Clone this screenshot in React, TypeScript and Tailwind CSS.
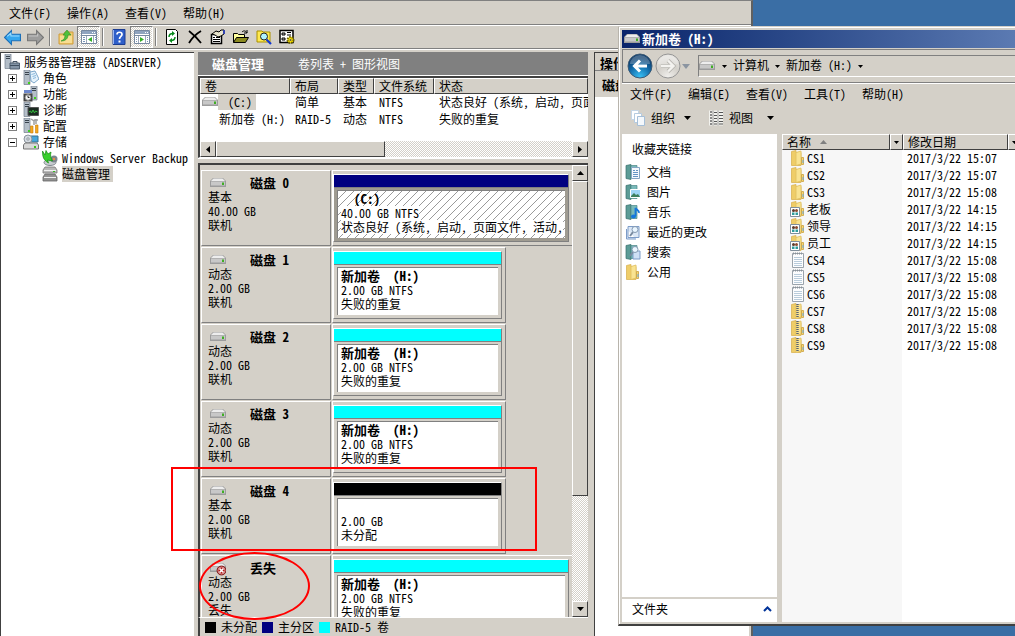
import type { ReactNode } from 'react'

type IconProps = { className?: string }

const RAISED = 'border border-t-white border-l-white border-r-[#404040] border-b-[#404040] bg-[#d4d0c8]'
const TRACK = 'bg-[repeating-conic-gradient(#ffffff_0_25%,#d4d0c8_0_50%)] bg-[length:2px_2px]'

function Svg({ children, className = 'h-4 w-4' }: { children: ReactNode; className?: string }) {
  return (
    <svg viewBox="0 0 16 16" className={`block shrink-0 ${className}`} aria-hidden="true">
      {children}
    </svg>
  )
}

function ArrowIcon({ forward = false }: { forward?: boolean }) {
  return (
    <Svg className="h-[17px] w-[17px]">
      <path
        d={forward ? 'M15.5 8 9 1.500v3.500H.5v6H9v3.500z' : 'M.5 8 7 1.500v3.500h8.500v6H7v3.500z'}
        fill={forward ? '#9d9d9d' : '#35a7ee'}
        stroke={forward ? '#777' : '#1c6fb8'}
      />
      <path d={forward ? 'M1.500 6.500H10V4.500' : 'M3 7 6.500 4V6.500h8'} stroke={forward ? '#c4c4c4' : '#9bdcff'} fill="none" />
    </Svg>
  )
}

function UpFolderIcon() {
  return (
    <Svg>
      <path d="M1 5h5l1-2h8v12H1z" fill="#f2ce72" stroke="#cf9c3a" />
      <path d="M2 7h12v7H2z" fill="#f8dd93" />
      <path d="M3 12c3-1 4-3 4-6H5l4-5 4 5h-3c0 4-3 6-7 6z" fill="#4fc13c" stroke="#2f8f24" strokeWidth=".6" />
    </Svg>
  )
}

function PaneIcon({ right = false }: { right?: boolean }) {
  return (
    <Svg>
      <path d="M.5 1.500h15v13H.5z" fill="#fff" stroke="#7788a0" />
      <path d="M1 2h14v3H1z" fill="#8fa3bf" />
      <path d="M11 3.500h1M13 3.500h1" stroke="#fff" />
      <path d="M1 6.500h14" stroke="#7788a0" />
      <path d={right ? 'M4.500 7v7M11.500 7v7' : 'M5.500 7v7M12.500 7v7'} stroke="#9aa7ba" />
      <path d={right ? 'M2 8.500h1M2 10.500h1M2 12.500h1M13 8.500h1M13 10.500h1M13 12.500h1' : 'M2 8.500h2M2 10.500h2M2 12.500h2M14 8.500h1M14 10.500h1'} stroke="#7a95b8" />
      <path d={right ? 'M6 8v5l4-2.500z' : 'M11 8v5l-4-2.500z'} fill="#36ae28" />
    </Svg>
  )
}

function HelpIcon() {
  return (
    <Svg>
      <path d="M2 .5h12v15H2z" fill="#2f5fc9" stroke="#1c3d91" />
      <path d="M2.500 1v14" stroke="#9fb7ee" />
      <path d="M6 5.500C6 2.500 11 2.500 11 5.500 11 7.500 8.500 7.500 8.500 10" stroke="#fff" strokeWidth="1.700" fill="none" />
      <path d="M7.500 11.500h2v2h-2z" fill="#fff" />
    </Svg>
  )
}

function RefreshIcon() {
  return (
    <Svg>
      <path d="M2.500.5h9l2 2v13h-11z" fill="#fff" stroke="#000" />
      <path d="M5 8c0-3 1.500-3.500 4-3.500M11 8c0 3-1.500 3.500-4 3.500" stroke="#078a1c" strokeWidth="1.500" fill="none" />
      <path d="M8 2v5l3-2.500zM8 9v5l-3-2.500z" fill="#078a1c" />
    </Svg>
  )
}

function DeleteIcon() {
  return (
    <Svg>
      <path d="M2 2c4 3 8 7 12 12M14 2C9 5 5 9 2 14" stroke="#000" strokeWidth="1.800" fill="none" />
    </Svg>
  )
}

function PropertiesIcon() {
  return (
    <Svg>
      <path d="M1.500 5.500h10v9h-10z" fill="#fff" stroke="#000" strokeWidth="1.500" />
      <path d="M3 8.500h2M6 8.500h4M3 10.500h7M3 12.500h7" stroke="#000" />
      <path d="m2 5 4-3 3 1 2-2h3v4l-3 2-3 1-3-2z" fill="#e8e4cc" stroke="#000" />
      <path d="M13 1h2v4h-2z" fill="#3344b0" />
    </Svg>
  )
}

function OpenIcon() {
  return (
    <Svg>
      <path d="M.5 13.500v-9h4l1 1h6v3" fill="#ffff9c" stroke="#000" />
      <path d="m.5 13.500 3-5h12l-3 5z" fill="#8b8a20" stroke="#000" />
      <path d="M9 3c2-2 4-1 5 1m0-3v3h-3" fill="none" stroke="#000" />
    </Svg>
  )
}

function FindIcon() {
  return (
    <Svg>
      <path d="M1 2h5l1 1h7v10H1z" fill="#ffe94f" stroke="#a99000" />
      <circle cx="8" cy="7.500" r="3.500" fill="#aef2ff" stroke="#222" />
      <path d="m10.500 10.500 4.500 4.500" stroke="#1237d0" strokeWidth="2.200" />
    </Svg>
  )
}

function SettingsIcon() {
  return (
    <Svg>
      <path d="M1 1.500h13v12H1z" fill="#fff" stroke="#000" strokeWidth="1.500" />
      <path d="M3 4h3v2H3zM3 9h3v2H3zM8 3.500h4M8 6h4" stroke="#000" fill="#bbb" />
      <circle cx="11.500" cy="11" r="3" fill="#ffe600" stroke="#6b6000" strokeWidth="2" strokeDasharray="1.500 1" />
      <circle cx="11.500" cy="11" r="1" fill="#555" />
    </Svg>
  )
}

/* Server tower with a small overlay in the lower right */
function ServerIcon({ kind }: { kind: 'root' | 'roles' | 'features' | 'diag' | 'config' }) {
  return (
    <Svg>
      <path d={kind === 'features' ? 'M8 0h6v14H8z' : 'M1 0h6v14.500H1z'} fill="#b4bec8" stroke="#74808c" strokeWidth=".7" />
      <path d={kind === 'features' ? 'M9 2.500h4M9 4.500h4' : 'M2 2.500h4M2 4.500h4'} stroke="#39434d" />
      {kind === 'root' && (
        <>
          <path d="M6 9h9.500v6H6z" fill="#8394a6" stroke="#506070" />
          <path d="M9 9V7.500h4V9M6 11.500h9" fill="none" stroke="#405060" />
        </>
      )}
      {kind === 'roles' && (
        <>
          <path d="m7 2 5-1 4 8-5 4-3-2z" fill="#e6f2fb" stroke="#5f92bd" strokeWidth=".8" />
          <path d="m8.500 4.500 3.500-1M9.500 6.500l3.500-1M10 8.500l3-1" stroke="#72a9d6" strokeWidth=".8" />
          <path d="M5 12h2v2H5z" fill="#3fd01b" />
        </>
      )}
      {kind === 'features' && (
        <>
          <path d="M1 4h8v3H1z" fill="#6d87cc" />
          <path d="M.5 7.500h9v8h-9z" fill="#444" />
          <circle cx="5" cy="11.500" r="2.800" fill="#f6f6f6" stroke="#999" />
          <path d="M5 9.500v2h1.500" stroke="#222" fill="none" />
          <path d="M11 11h2v2h-2z" fill="#3fd01b" />
        </>
      )}
      {kind === 'diag' && (
        <>
          <path d="M5 5.500h10.500v8H5z" fill="#1b2a20" stroke="#555" />
          <path d="m6 10 1.500-1 1 2 1.500-3 1.500 3 1-2 2 1" stroke="#35b93c" fill="none" />
        </>
      )}
      {kind === 'config' && (
        <>
          <path d="m8 1 3 2v4M13 1v5M11 2h4" stroke="#a1a1a1" strokeWidth="1.500" fill="none" />
          <path d="M7.500 8h2.500v7H7.500zM12.500 7h2.500v8h-2.500z" fill="#f5a91f" stroke="#c87a08" strokeWidth=".6" />
          <path d="M5 12h2v2H5z" fill="#3fd01b" />
        </>
      )}
    </Svg>
  )
}

function StorageIcon() {
  return (
    <Svg>
      <path d="M8 2h7v6H8z" fill="#47a7dc" stroke="#39708f" />
      <circle cx="5" cy="5" r="4" fill="#d4dae0" stroke="#8a939c" />
      <circle cx="5" cy="5" r="1.200" fill="#fff" stroke="#8a939c" />
      <path d="m2 9h12l1.500 2v4H.5v-4z" fill="#d8d8d8" stroke="#777" />
      <path d="M11 12h2v2h-2z" fill="#32cb16" />
    </Svg>
  )
}

function BackupIcon() {
  return (
    <Svg>
      <ellipse cx="8" cy="12.500" rx="6" ry="3" fill="#c7ccd0" stroke="#81888f" />
      <circle cx="12" cy="9" r="3.500" fill="#7b858e" />
      <circle cx="12" cy="9" r="1.200" fill="#e98b4d" />
      <path d="M.5 1c0 6 1 9 6 12l-1-3 5 1C9 8 8 6 9 2L6 4 4 .5 3 5z" fill="#39d02c" stroke="#148b10" strokeWidth=".7" />
    </Svg>
  )
}

function DiskManagementIcon() {
  return (
    <Svg>
      <path d="M3 1h10l2 3v3H1V4z" fill="#b8b8b8" stroke="#777" strokeWidth=".8" />
      <path d="M3 8h10l2 3v4H1v-4z" fill="#929292" stroke="#666" strokeWidth=".8" />
      <path d="M2 4.500h12M2 11.500h12" stroke="#f0f0f0" />
      <path d="M11 5.500h2" stroke="#35bb21" />
    </Svg>
  )
}

function DriveIcon({ lost = false }: { lost?: boolean }) {
  return (
    <Svg>
      <path d="M3 3h10l3 3v6H0V6z" fill="#9c9c9c" />
      <path d="M3.500 3.500h9l2.500 2.500H1z" fill="#ededed" />
      <path d="M1 6.500h14v4H1z" fill="#c8c8c8" />
      <path d="M12 7.500h2V10h-2z" fill={lost ? '#999' : '#3fae23'} />
      {lost && (
        <>
          <circle cx="11.500" cy="10.500" r="4.500" fill="#b31b1b" stroke="#6d0d0d" strokeWidth=".8" />
          <circle cx="11.500" cy="10.500" r="3.500" fill="none" stroke="#e9c4c4" strokeWidth=".7" />
          <path d="m9.500 8.500 4 4m0-4-4 4" stroke="#fff" strokeWidth="1.600" />
        </>
      )}
    </Svg>
  )
}

function FolderIcon({ kind = 'plain' }: { kind?: string }) {
  return (
    <Svg>
      <path d="M1.500 1.500 6 .5v2h5v13H1.500z" fill="#efcd68" stroke="#d9b454" strokeWidth=".8" />
      <path d="M6 2.500 11 1v13l-5 1.500z" fill="#f9e391" stroke="#dfbf60" strokeWidth=".8" />
      <path d="M11.500 7.500h2v7h-2z" fill="#f4d674" stroke="#c9a03c" strokeWidth=".8" />
      <path d="M13 10v3" stroke="#6aa8e0" />
      {kind === 'zip' && (
        <path d="M7.500 1v14" stroke="#5b6470" strokeWidth="2.400" strokeDasharray="1 1" />
      )}
      {kind === 'shared' && (
        <>
          <path d="M.5 6.500h9v9h-9z" fill="#fff" stroke="#7f8f9c" />
          <circle cx="3.500" cy="9.500" r="1.500" fill="#5b3b2d" />
          <circle cx="6.500" cy="9.500" r="1.500" fill="#8b4a2d" />
          <path d="M2 14v-2.500h2.500V14M5.500 14v-2.500H8V14" fill="#2f9c9c" />
        </>
      )}
    </Svg>
  )
}

function TextFileIcon() {
  return (
    <Svg>
      <path d="M2.500 1.500h11v14h-11z" fill="#fcfdfe" stroke="#9aa3ab" />
      <path d="M4 5.500h8M4 7.500h8M4 9.500h8M4 11.500h8M4 13.500h8" stroke="#b9ccdb" />
      <path d="M3 1.500h10" stroke="#8a9299" strokeWidth="2" strokeDasharray="1 1" />
    </Svg>
  )
}

function LinkIcon({ kind }: { kind: string }) {
  if (kind === 'folder') return <FolderIcon />
  return (
    <Svg>
      {kind === 'recent' ? (
        <path d="M3 2.500h11v11H3zM1.500 5v10H11" fill="#dbe7f5" stroke="#7d9cc8" />
      ) : (
        <>
          <path d="M1 1.500 6 .5v15l-5-1z" fill="#5c9c96" stroke="#376f6c" strokeWidth=".7" />
          <path d="M6 1.500h6v13H6z" fill="#79b9b9" stroke="#4a8787" strokeWidth=".7" />
        </>
      )}
      {kind === 'doc' && (
        <>
          <path d="M6.500 3.500h8v11h-8z" fill="#f5f9fd" stroke="#86a6c3" />
          <path d="M8 6.500h2M11 6.500h2M8 8.500h5M8 10.500h5M8 12.500h5" stroke="#6394c4" />
        </>
      )}
      {kind === 'picture' && (
        <>
          <path d="M5.500 5.500h10v8h-10z" fill="#9fd5f5" stroke="#fff" />
          <path d="m6 12 3-3 2 2 2-1 2 3H6z" fill="#3d7f5d" />
        </>
      )}
      {kind === 'music' && (
        <>
          <path d="M10.500 12V4c1 2 4 2 3.500 5" stroke="#1477dc" strokeWidth="1.800" fill="none" />
          <ellipse cx="8.500" cy="12.500" rx="2.500" ry="2" fill="#1477dc" />
        </>
      )}
      {(kind === 'recent' || kind === 'search') && (
        <>
          {kind === 'search' && <path d="M8 7h7v8H8z" fill="#cfe0f5" stroke="#7d9cc8" />}
          <path d="m5 12 3-4" stroke="#7a8ba0" strokeWidth="2" />
          <circle cx="10" cy="5.500" r="3" fill="#eaf6ff" stroke="#8499b0" />
        </>
      )}
    </Svg>
  )
}

function OrganizeIcon() {
  return (
    <Svg>
      <path d="M1.500.5h7v9h-7z" fill="#fff" stroke="#c5d6e6" />
      <path d="M4.500 3.500h7v9h-7z" fill="#fff" stroke="#b5cbe0" />
      <path d="M7.500 6.500h7v9h-7z" fill="#f4f8fc" stroke="#a5bfd8" />
    </Svg>
  )
}

function ViewIcon() {
  return (
    <Svg>
      <path d="M1 .5h14v15H1z" fill="#f2f2ee" />
      <path d="M3 1v14" stroke="#8a8a8a" strokeWidth="2" strokeDasharray="2 1" />
      <path d="M6 2.500h3M6 5.500h3M6 8.500h3M6 11.500h3M6 14h3M11 2.500h4M11 5.500h4M11 8.500h4M11 11.500h4M11 14h4" stroke="#555" />
      <path d="M5 .5v15M10 .5v15" stroke="#999" />
    </Svg>
  )
}

function Triangle({ dir = 'down', className = 'h-[4px] w-[7px]' }: IconProps & { dir?: 'up' | 'down' | 'left' | 'right' }) {
  const paths = { down: 'M0 0h8L4 8z', up: 'M0 8h8L4 0z', left: 'M8 0v8L0 4z', right: 'M0 0v8l8-4z' }
  return (
    <svg viewBox="0 0 8 8" preserveAspectRatio="none" className={`block shrink-0 ${className}`} aria-hidden="true">
      <path d={paths[dir]} fill="currentColor" />
    </svg>
  )
}

function MenuBar({ items, className }: { items: string[]; className: string }) {
  return (
    <nav className={`flex items-center gap-4 ${className}`}>
      {items.map((item) => (
        <button key={item} className="whitespace-nowrap">{item}</button>
      ))}
    </nav>
  )
}

function ToolButton({ label, pressed = false, children }: { label: string; pressed?: boolean; children: ReactNode }) {
  return (
    <button
      aria-label={label}
      className={`flex h-[22px] w-[23px] shrink-0 items-center justify-center ${
        pressed ? `border border-t-[#808080] border-l-[#808080] border-r-white border-b-white ${TRACK}` : ''
      }`}
    >
      {children}
    </button>
  )
}

function ToolDivider() {
  return <div className="mr-[3px] ml-[2px] h-[18px] w-[2px] shrink-0 border-l border-l-[#808080] border-r border-r-white" />
}

const treeItems = [
  { label: '角色', icon: <ServerIcon kind="roles" />, open: false },
  { label: '功能', icon: <ServerIcon kind="features" />, open: false },
  { label: '诊断', icon: <ServerIcon kind="diag" />, open: false },
  { label: '配置', icon: <ServerIcon kind="config" />, open: false },
  { label: '存储', icon: <StorageIcon />, open: true },
]

function Tree() {
  return (
    <nav className="w-[194px] shrink-0 overflow-hidden border-t border-l border-[#404040] bg-white pt-px leading-4 whitespace-nowrap">
      <div className="flex items-center gap-1 pl-[3px]">
        <ServerIcon kind="root" />
        服务器管理器 (ADSERVER)
      </div>
      <ul>
        {treeItems.map((item) => (
          <li key={item.label} className="flex items-center pl-[7px]">
            <button
              aria-label={item.label}
              className="mr-[6px] flex h-[9px] w-[9px] items-center justify-center border border-[#808080]"
            >
              <svg viewBox="0 0 5 5" className="block h-[5px] w-[5px]">
                <path d={item.open ? 'M0 2.500h5' : 'M0 2.500h5M2.500 0v5'} stroke="#000" />
              </svg>
            </button>
            {item.icon}
            <span className="pl-1">{item.label}</span>
          </li>
        ))}
        <li className="flex items-center gap-1 pl-[41px]">
          <BackupIcon />
          Windows Server Backup
        </li>
        <li className="flex items-center gap-1 pl-[41px]">
          <DiskManagementIcon />
          <span className="bg-[#d4d0c8] pr-[3px]">磁盘管理</span>
        </li>
      </ul>
    </nav>
  )
}

const volumes = [
  { name: '(C:)', layout: '简单', type: '基本', fs: 'NTFS', status: '状态良好 (系统, 启动, 页面文件, 活动', selected: true },
  { name: '新加卷 (H:)', layout: 'RAID-5', type: '动态', fs: 'NTFS', status: '失败的重复', selected: false },
]

const volumeColumns = [
  { label: '卷', width: 'w-[90px]' },
  { label: '布局', width: 'w-[48px]' },
  { label: '类型', width: 'w-[36px]' },
  { label: '文件系统', width: 'w-[60px]' },
  { label: '状态', width: '' },
]

function VolumeList() {
  return (
    <section className="border-t-2 border-l-2 border-[#404040] border-b border-b-white bg-white">
      <div className="h-[63px] overflow-hidden">
        <table className="w-full table-fixed border-collapse whitespace-nowrap">
          <thead>
            <tr>
              {volumeColumns.map((c) => (
                <th key={c.label} className={`p-0 font-normal ${c.width}`}>
                  <button className={`block h-4 w-full pl-1 text-left leading-[14px] ${RAISED}`}>
                    {c.label}
                  </button>
                </th>
              ))}
            </tr>
          </thead>
          <tbody className="leading-4">
            {volumes.map((v) => (
              <tr key={v.name}>
                <td className="p-0 pb-px">
                  {v.selected ? (
                    <div className="flex items-center pl-[2px]">
                      <DriveIcon />
                      <span className="bg-[#d4d0c8] pr-1 pl-[10px]">{v.name}</span>
                    </div>
                  ) : (
                    <div className="pl-[19px]">{v.name}</div>
                  )}
                </td>
                <td className="p-0 pb-px pl-[5px]">{v.layout}</td>
                <td className="p-0 pb-px pl-[5px]">{v.type}</td>
                <td className="p-0 pb-px pl-[5px]">{v.fs}</td>
                <td className="overflow-hidden p-0 pb-px pl-[5px]">{v.status}</td>
              </tr>
            ))}
          </tbody>
        </table>
      </div>
      <div className={`flex h-4 ${TRACK}`}>
        <button aria-label="向左滚动" className={`flex w-4 items-center justify-center ${RAISED}`}>
          <Triangle dir="left" className="h-[7px] w-[4px]" />
        </button>
        <div className={`w-[169px] ${RAISED}`} />
        <button aria-label="向右滚动" className={`ml-auto flex w-4 items-center justify-center ${RAISED}`}>
          <Triangle dir="right" className="h-[7px] w-[4px]" />
        </button>
      </div>
    </section>
  )
}

interface Disk {
  name: string
  type: string
  size: string
  state: string
  bar: string
  lines: string[]
  wide?: boolean
  selected?: boolean
  lost?: boolean
}

const raidLines = ['新加卷  (H:)', '2.00 GB NTFS', '失败的重复']

const disks: Disk[] = [
  {
    name: '磁盘 0', type: '基本', size: '40.00 GB', state: '联机', bar: 'bg-[#000080]',
    lines: ['  (C:)', '40.00 GB NTFS', '状态良好 (系统, 启动, 页面文件, 活动,'], wide: true, selected: true,
  },
  { name: '磁盘 1', type: '动态', size: '2.00 GB', state: '联机', bar: 'bg-[#00ffff]', lines: raidLines },
  { name: '磁盘 2', type: '动态', size: '2.00 GB', state: '联机', bar: 'bg-[#00ffff]', lines: raidLines },
  { name: '磁盘 3', type: '动态', size: '2.00 GB', state: '联机', bar: 'bg-[#00ffff]', lines: raidLines },
  { name: '磁盘 4', type: '基本', size: '2.00 GB', state: '联机', bar: 'bg-black', lines: ['', '2.00 GB', '未分配'] },
  { name: '丢失', type: '动态', size: '2.00 GB', state: '丢失', bar: 'bg-[#00ffff]', lines: raidLines, wide: true, lost: true },
]

function Hatch() {
  return (
    <svg className="absolute inset-0 h-full w-full" aria-hidden="true">
      <defs>
        <pattern id="hatch" width="8" height="8" patternUnits="userSpaceOnUse">
          <path d="M-1 9 9-1M-1 1l2-2M7 9l2-2" stroke="#9a9a9a" strokeWidth="1" />
        </pattern>
      </defs>
      <rect width="100%" height="100%" fill="url(#hatch)" />
    </svg>
  )
}

function DiskRow({ disk }: { disk: Disk }) {
  return (
    <li className="mb-px flex h-[76px] gap-px">
      <div className="w-[130px] shrink-0 border border-t-white border-l-white border-r-[#808080] border-b-[#808080] pt-[5px] pl-[6px] leading-[14px]">
        <div className="flex h-[14px] items-center gap-6 text-[13px] font-bold">
          <span className="pl-[2px]"><DriveIcon lost={disk.lost} /></span>
          {disk.name}
        </div>
        <p>{disk.type}</p>
        <p>{disk.size}</p>
        <p>{disk.state}</p>
      </div>
      <div
        className={`flex border-t border-l border-t-white border-l-white border-b border-b-[#808080] pt-[3px] pb-[3px] pr-[3px] ${
          disk.wide ? 'min-w-0 flex-1' : 'w-[174px] border-r border-r-[#808080]'
        }`}
      >
        <div className="flex min-w-0 flex-1 flex-col border border-t-white border-l-white border-r-[#808080] border-b-[#808080]">
          <div className={`h-[13px] border-b border-[#808080] ${disk.bar}`} />
          <div className={`flex min-h-0 flex-1 px-[3px] pt-[2px] pb-[3px] ${disk.selected ? 'bg-[#9f9b91]' : ''}`}>
            <div className="relative min-w-0 flex-1 overflow-hidden border-t border-l border-[#808080] bg-white pt-px pl-[3px] leading-[14px] whitespace-pre">
              {disk.selected && <Hatch />}
              {disk.lines.map((line, i) => (
                <p
                  key={i}
                  className={`relative h-[14px] w-fit ${i === 0 ? 'text-[13px] font-bold' : ''} ${
                    disk.selected && i > 0 ? 'bg-white' : ''
                  }`}
                >
                  {line}
                </p>
              ))}
            </div>
          </div>
        </div>
      </div>
    </li>
  )
}

function DiskGraph() {
  return (
    <section className="flex min-h-0 flex-1 border-t-2 border-l-2 border-[#404040]">
      <ul className="min-w-0 flex-1 overflow-hidden pt-[5px] pl-px">
        {disks.map((d) => (
          <DiskRow key={d.name} disk={d} />
        ))}
      </ul>
      <div className={`flex w-4 shrink-0 flex-col ${TRACK}`}>
        <button aria-label="向上滚动" className={`flex h-4 items-center justify-center ${RAISED}`}>
          <Triangle dir="up" />
        </button>
        <div className={`h-[315px] ${RAISED}`} />
        <button aria-label="向下滚动" className={`mt-auto flex h-4 items-center justify-center ${RAISED}`}>
          <Triangle />
        </button>
      </div>
    </section>
  )
}

const legend = [
  { label: '未分配', color: 'bg-black' },
  { label: '主分区', color: 'bg-[#000080]' },
  { label: 'RAID-5 卷', color: 'bg-[#00ffff]' },
]

function ServerManager() {
  return (
    <main className="mr-[262px] flex h-full flex-col border-t border-t-[#808080] border-r-2 border-r-[#606060] bg-[#d4d0c8]">
      <MenuBar
        items={['文件(F)', '操作(A)', '查看(V)', '帮助(H)']}
        className="h-6 border-b border-b-[#808080] pl-[9px]"
      />
      <div className="flex h-[24px] items-center border-t border-t-white border-b border-b-[#808080] pl-px">
        <ToolButton label="后退"><ArrowIcon /></ToolButton>
        <ToolButton label="前进"><ArrowIcon forward /></ToolButton>
        <ToolDivider />
        <ToolButton label="向上"><UpFolderIcon /></ToolButton>
        <ToolButton label="显示控制台树" pressed><PaneIcon /></ToolButton>
        <ToolDivider />
        <ToolButton label="帮助"><HelpIcon /></ToolButton>
        <ToolButton label="显示操作窗格" pressed><PaneIcon right /></ToolButton>
        <ToolDivider />
        <ToolButton label="刷新"><RefreshIcon /></ToolButton>
        <ToolButton label="删除"><DeleteIcon /></ToolButton>
        <ToolButton label="属性"><PropertiesIcon /></ToolButton>
        <ToolButton label="打开"><OpenIcon /></ToolButton>
        <ToolButton label="查找"><FindIcon /></ToolButton>
        <ToolButton label="设置"><SettingsIcon /></ToolButton>
      </div>
      <div className="flex min-h-0 flex-1 border-t border-t-white pt-[2px]">
        <Tree />
        <div className="ml-1 flex w-[390px] shrink-0 flex-col">
          <header className="flex h-6 items-center gap-[34px] border-b border-b-white bg-[#808080] pl-[14px] text-white">
            <h1 className="text-[13px] font-bold">磁盘管理</h1>
            <span>卷列表 + 图形视图</span>
          </header>
          <VolumeList />
          <div className="h-[5px] border-t border-t-white" />
          <DiskGraph />
          <footer className="flex h-[19px] shrink-0 items-center gap-[5px] border-t border-l-2 border-t-white border-l-[#404040] pl-[5px]">
            {legend.map((l) => (
              <span key={l.label} className="flex items-center gap-[5px]">
                <i className={`block h-[11px] w-[11px] ${l.color}`} />
                {l.label}
              </span>
            ))}
          </footer>
        </div>
        <aside className="ml-[6px] min-w-0 flex-1 overflow-hidden border-l border-t border-[#404040] bg-white text-[13px] font-bold whitespace-nowrap">
          <h2 className="h-[18px] border-b border-b-[#808080] bg-[#d4d0c8] pl-[5px] leading-[20px]">操作</h2>
          <h3 className="h-[26px] bg-[#d4d0c8] pl-[7px] leading-[28px]">磁盘管理</h3>
        </aside>
        <div className="w-[3px] shrink-0 border-l border-l-white" />
      </div>
    </main>
  )
}

function NavCircle({ forward = false }: { forward?: boolean }) {
  return (
    <svg viewBox="0 0 26 26" className="block h-[26px] w-[26px]" aria-hidden="true">
      <defs>
        <radialGradient id={forward ? 'fwd' : 'back'} cx=".5" cy=".95" r=".8">
          <stop offset="0" stopColor={forward ? '#f0efec' : '#37c0f5'} />
          <stop offset=".6" stopColor={forward ? '#d3d0ca' : '#126aa8'} />
          <stop offset="1" stopColor={forward ? '#e2e0dc' : '#0d3c6b'} />
        </radialGradient>
      </defs>
      <circle cx="13" cy="13" r="12" fill={forward ? 'url(#fwd)' : 'url(#back)'} stroke={forward ? '#969696' : '#3d5a74'} />
      <path d="M3 11a10 9 0 0 1 20 0z" fill="#fff" opacity=".25" />
      <path
        d={forward ? 'M6 13h12M13 7.500l5.500 5.500-5.500 5.500' : 'M20 13H8M13 7.500 7.500 13l5.500 5.500'}
        stroke={forward ? '#b9b7b2' : '#fff'}
        strokeWidth={forward ? '4' : '3'}
        fill="none"
      />
      {forward && <path d="M6 13h12M13 7.500l5.500 5.500-5.500 5.500" stroke="#f4f3f0" strokeWidth="2.400" fill="none" />}
    </svg>
  )
}

const links = [
  { label: '文档', kind: 'doc' },
  { label: '图片', kind: 'picture' },
  { label: '音乐', kind: 'music' },
  { label: '最近的更改', kind: 'recent' },
  { label: '搜索', kind: 'search' },
  { label: '公用', kind: 'folder' },
]

const files = [
  { name: 'CS1', date: '2017/3/22 15:07', kind: 'plain' },
  { name: 'CS2', date: '2017/3/22 15:07', kind: 'plain' },
  { name: 'CS3', date: '2017/3/22 15:08', kind: 'plain' },
  { name: '老板', date: '2017/3/22 14:15', kind: 'shared' },
  { name: '领导', date: '2017/3/22 14:15', kind: 'shared' },
  { name: '员工', date: '2017/3/22 14:15', kind: 'shared' },
  { name: 'CS4', date: '2017/3/22 15:08', kind: 'text' },
  { name: 'CS5', date: '2017/3/22 15:08', kind: 'text' },
  { name: 'CS6', date: '2017/3/22 15:08', kind: 'text' },
  { name: 'CS7', date: '2017/3/22 15:08', kind: 'zip' },
  { name: 'CS8', date: '2017/3/22 15:08', kind: 'zip' },
  { name: 'CS9', date: '2017/3/22 15:08', kind: 'zip' },
]

function ColumnHead({ label, sorted = false }: { label: string; sorted?: boolean }) {
  return (
    <div className="flex h-4">
      <button className={`flex min-w-0 flex-1 items-center gap-[9px] pl-1 leading-[14px] ${RAISED}`}>
        {label}
        {sorted && <Triangle dir="up" className="h-[4px] w-[7px] text-[#808080]" />}
      </button>
      <button aria-label={`${label}筛选`} className={`flex w-[13px] items-center justify-center ${RAISED}`}>
        <Triangle className="h-[3px] w-[5px]" />
      </button>
    </div>
  )
}

function FileTable() {
  return (
    <div className="min-w-0 flex-1 overflow-hidden bg-[linear-gradient(to_right,#f7f7f7_120px,#ffffff_120px)]">
      <table className="w-full min-w-[242px] table-fixed border-collapse whitespace-nowrap">
        <thead>
          <tr>
            <th className="w-[121px] p-0 font-normal"><ColumnHead label="名称" sorted /></th>
            <th className="w-[118px] p-0 font-normal"><ColumnHead label="修改日期" /></th>
            <th className="p-0"><div className={`h-4 ${RAISED}`} /></th>
          </tr>
        </thead>
        <tbody className="leading-4">
          {files.map((f) => (
            <tr key={f.name}>
              <td className="p-0 pb-px">
                <a href="#" className="flex items-center gap-px pl-2">
                  {f.kind === 'text' ? <TextFileIcon /> : <FolderIcon kind={f.kind} />}
                  {f.name}
                </a>
              </td>
              <td className="p-0 pb-px pl-1">{f.date}</td>
              <td />
            </tr>
          ))}
        </tbody>
      </table>
    </div>
  )
}

function Explorer() {
  return (
    <section className="absolute top-[26px] right-0 bottom-[10px] left-[618px] flex flex-col overflow-hidden border-t border-l border-b-2 border-t-[#d4d0c8] border-l-[#b8b4ac] border-b-[#404040] bg-[#d4d0c8]">
      <div className="flex min-h-0 flex-1 flex-col border-t border-l border-white pt-[2px] pb-[2px] pl-[2px]">
        <header className="flex h-[18px] shrink-0 items-center gap-[2px] bg-linear-to-r from-[#0a246a] to-[#5b7ab2] pl-[2px] text-[13px] font-bold whitespace-pre text-white">
          <DriveIcon />
          <h2>新加卷 (H:)</h2>
        </header>
        <div className="mt-px flex h-[34px] shrink-0 items-center border-t border-l border-b border-[#808080] pl-1">
          <button aria-label="后退"><NavCircle /></button>
          <button aria-label="前进" className="ml-[2px]"><NavCircle forward /></button>
          <button aria-label="最近的位置" className="ml-px text-[#8b95a1]"><Triangle className="h-[5px] w-2" /></button>
          <div className="ml-2 flex h-[22px] min-w-0 flex-1 items-center border-t border-l border-b border-t-[#808080] border-l-[#808080] border-b-white whitespace-nowrap">
            <DriveIcon />
            <Triangle className="ml-[7px] h-[3px] w-[5px]" />
            <button className="ml-[6px] pb-[3px]">计算机</button>
            <Triangle className="ml-[6px] h-[3px] w-[5px]" />
            <button className="ml-[6px] pb-[3px]">新加卷 (H:)</button>
            <Triangle className="ml-[6px] h-[3px] w-[5px]" />
          </div>
        </div>
        <MenuBar
          items={['文件(F)', '编辑(E)', '查看(V)', '工具(T)', '帮助(H)']}
          className="h-5 shrink-0 border-t border-t-white pl-[8px]"
        />
        <div className="flex h-[31px] shrink-0 items-center pb-px pl-2">
          <button className="flex items-center">
            <OrganizeIcon />
            <span className="mr-[9px] ml-[5px]">组织</span>
            <Triangle />
          </button>
          <button className="ml-[17px] flex items-center">
            <ViewIcon />
            <span className="mr-[14px] ml-[5px]">视图</span>
            <Triangle />
          </button>
        </div>
        <div className="flex min-h-0 flex-1">
          <div className="flex w-[155px] shrink-0 flex-col bg-white">
            <h3 className="pt-[5px] pl-[10px] leading-5">收藏夹链接</h3>
            <ul className="pt-[3px]">
              {links.map((l) => (
                <li key={l.label}>
                  <a href="#" className="flex h-5 items-center gap-[6px] pl-[3px]">
                    <LinkIcon kind={l.kind} />
                    {l.label}
                  </a>
                </li>
              ))}
            </ul>
            <button className="mt-auto flex h-[25px] items-center justify-between border-t-2 border-[#d4d0c8] pr-[5px] pb-[3px] pl-[10px]">
              文件夹
              <svg viewBox="0 0 9 6" className="block h-[6px] w-[9px]">
                <path d="m1 5 3.500-3.500L8 5" stroke="#003399" strokeWidth="2" fill="none" />
              </svg>
            </button>
          </div>
          <div className="w-[5px] shrink-0" />
          <FileTable />
        </div>
      </div>
    </section>
  )
}

export default function App() {
  return (
    <div className="relative h-screen w-full overflow-hidden bg-[#3a6ea5] font-['Noto_Sans_CJK_SC','Liberation_Mono',monospace] text-[12px] leading-4 text-black [font-feature-settings:'hwid']">
      <ServerManager />
      <Explorer />
      {/* Red marks round the replaced disk and the missing one */}
      <div className="pointer-events-none absolute top-[467px] left-[171px] h-[84px] w-[366px] border-2 border-[#ff0000]" />
      <div className="pointer-events-none absolute top-[552px] left-[199px] h-[68px] w-[111px] rounded-[50%] border-2 border-[#ff0000]" />
    </div>
  )
}
